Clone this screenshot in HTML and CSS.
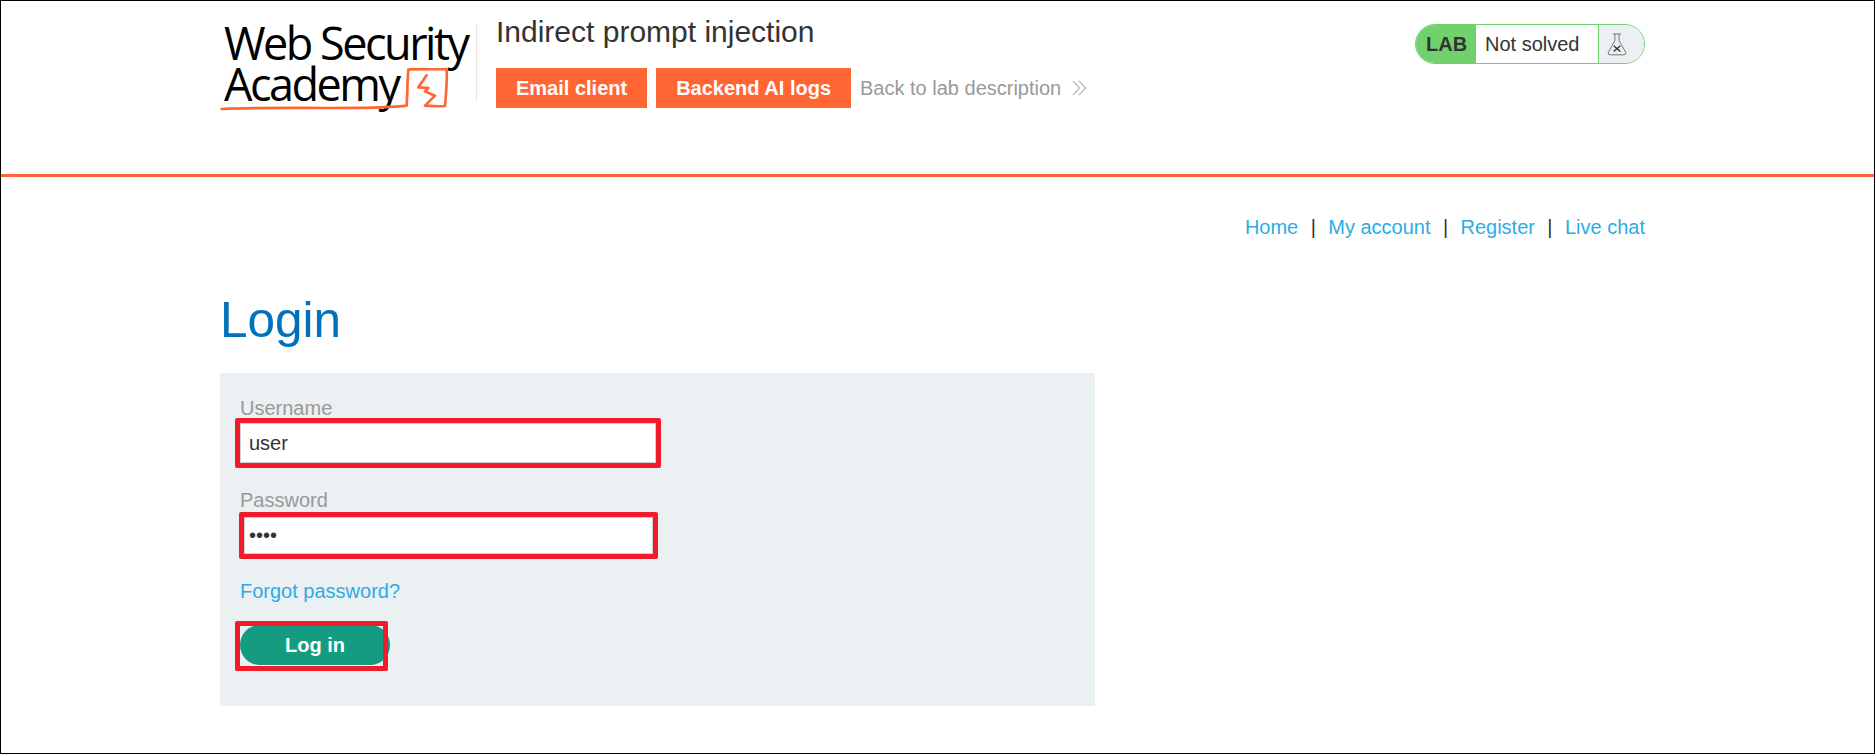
FILE: index.html
```html
<!DOCTYPE html>
<html lang="en">
<head>
  <meta charset="UTF-8" />
  <title>Indirect prompt injection</title>
  <link rel="stylesheet" href="styles.css">
</head>
<body>

<header class="lab-header">
  <div class="lab-header-inner">
    <a class="logo" href="#">
      <span class="logo-line">Web Security</span>
      <span class="logo-line">Academy</span>
      <svg class="logo-mark" viewBox="60 190 750 150" width="250" height="50" aria-hidden="true">
        <path d="M65 325 C200 318 400 325 540 320 C570 319 600 318 620 315 C622 280 622 240 625 207 C660 204 700 207 740 205 C742 240 738 280 735 316 C715 318 695 316 675 315 L705 285 L675 272 L685 262 L655 260 L680 224" fill="none" stroke="#ff6633" stroke-width="8" stroke-linejoin="round" stroke-linecap="round"/>
      </svg>
    </a>
    <div class="lab-title">
      <h2>Indirect prompt injection</h2>
      <div class="lab-links">
        <a class="btn-orange" href="#">Email client</a>
        <a class="btn-orange" href="#">Backend AI logs</a>
        <a class="back-link" href="#">Back to lab description
          <svg viewBox="0 0 14 16" width="14" height="16" aria-hidden="true">
            <path d="M1 1 L7.5 8 L1 15 M7 1 L13.5 8 L7 15" fill="none" stroke="#a6a6a6" stroke-width="1.1"/>
          </svg>
        </a>
      </div>
    </div>
    <div class="lab-status">
      <span class="status-tag">LAB</span>
      <span class="status-text">Not solved</span>
      <span class="status-icon">
        <svg viewBox="0 0 24 28" width="20" height="24" aria-hidden="true">
          <path d="M7 2 H17 M9.5 2 V10 L1.5 24 Q1 27 4 27 H20 Q23 27 22.5 24 L14.5 10 V2" fill="none" stroke="#777" stroke-width="1.2"/>
          <path d="M8 16 L16 23 M16 16 L8 23" fill="none" stroke="#333" stroke-width="1.6"/>
        </svg>
      </span>
    </div>
  </div>
</header>

<main class="page">
  <nav class="top-nav">
    <a href="#">Home</a><span class="sep">|</span>
    <a href="#">My account</a><span class="sep">|</span>
    <a href="#">Register</a><span class="sep">|</span>
    <a href="#">Live chat</a>
  </nav>

  <h1>Login</h1>

  <form class="login-form">
    <label for="username">Username</label>
    <div class="mark mark-wide">
      <input id="username" type="text" value="user" />
    </div>
    <label for="password">Password</label>
    <div class="mark mark-narrow">
      <input id="password" type="password" value="user" />
    </div>
    <a class="forgot" href="#">Forgot password?</a>
    <div class="login-row">
      <button type="button">Log in</button>
      <span class="mark-btn"></span>
    </div>
  </form>
</main>

</body>
</html>
```

FILE: styles.css
```css
* {
  box-sizing: border-box;
}
html, body {
  height: 100%;
}
body {
  margin: 0;
  border: 1px solid #000;
  background: #fff;
  color: #333332;
  font-family: 'Liberation Sans', Arial, sans-serif;
  font-size: 20px;
  overflow: hidden;
}
a {
  text-decoration: none;
}

.lab-header {
  height: 176px;
  border-bottom: 3px solid #ff6633;
}
.lab-header-inner {
  display: flex;
  width: 1425px;
  margin-left: 219px;
  padding-top: 16px;
}

.logo {
  position: relative;
  display: block;
  width: 256px;
  height: 86px;
  margin-top: 5px;
  padding-left: 4px;
  color: #000;
  font-family: 'Open Sans', 'Liberation Sans', sans-serif;
  font-size: 45px;
  font-weight: 500;
  line-height: 41px;
  letter-spacing: -2.5px;
}
.logo-line {
  display: block;
  white-space: nowrap;
}
.logo-mark {
  position: absolute;
  left: 0;
  top: 42px;
}

.lab-title {
  height: 78px;
  margin-top: 7px;
  padding-left: 19px;
  border-left: 1px solid #e6e6e6;
}
.lab-title h2 {
  margin: -12px 0 0;
  font-size: 30px;
  font-weight: 400;
  line-height: 40px;
  color: #333332;
}
.lab-links {
  display: flex;
  align-items: center;
  margin-top: 16px;
}
.btn-orange {
  height: 40px;
  margin-right: 9px;
  padding: 0 20px;
  background: #ff6633;
  color: #fff;
  font-weight: 700;
  line-height: 40px;
  white-space: nowrap;
}
.back-link {
  display: flex;
  align-items: center;
  gap: 11px;
  color: #999;
  white-space: nowrap;
}

.lab-status {
  display: flex;
  align-items: stretch;
  width: 230px;
  height: 40px;
  margin-left: auto;
  margin-top: 7px;
  border: 1px solid #70d16d;
  border-radius: 20px;
  overflow: hidden;
}
.status-tag {
  width: 60px;
  padding-left: 10px;
  background: #70d16d;
  font-weight: 700;
  line-height: 38px;
}
.status-text {
  flex: 1;
  padding-left: 9px;
  line-height: 38px;
}
.status-icon {
  display: flex;
  align-items: center;
  justify-content: center;
  width: 46px;
  padding-right: 10px;
  border-left: 1px solid #70d16d;
  background: #ebf0f2;
}

.page {
  width: 1425px;
  margin-left: 219px;
}
.top-nav {
  display: flex;
  justify-content: flex-end;
  margin-top: 38px;
  line-height: 24px;
}
.top-nav a {
  color: #2dabe8;
}
.sep {
  margin: 0 12.4px;
}

h1 {
  margin: 50px 0 0;
  font-size: 49.5px;
  font-weight: 400;
  line-height: 62px;
  color: #0071bc;
}

.login-form {
  width: 875px;
  height: 333px;
  margin-top: 22px;
  padding: 24px 20px 0;
  background: #ebf0f2;
}
label {
  display: block;
  color: #999;
  line-height: 22px;
}
.mark {
  border: 5px solid #f01c2b;
  border-radius: 2px;
}
.mark-wide {
  width: 426px;
  height: 50px;
  margin-left: -5px;
  margin-top: -1px;
}
.mark-narrow {
  width: 419px;
  height: 47px;
  margin-left: -1px;
  margin-top: 1px;
}
input {
  display: block;
  width: 100%;
  height: 100%;
  padding: 0 8px;
  border: 1px solid #cbd0d1;
  background: #fff;
  color: #333332;
  font-family: inherit;
  font-size: 20px;
}
.mark-narrow input {
  padding-left: 4px;
}
.mark + label {
  margin-top: 21px;
}
.forgot {
  display: block;
  margin-top: 21px;
  color: #2dabe8;
  line-height: 22px;
}
.login-row {
  position: relative;
  margin-top: 23px;
}
button {
  display: block;
  width: 150px;
  height: 40px;
  border: 0;
  border-radius: 20px;
  background: #159b7f;
  color: #fff;
  font-family: inherit;
  font-size: 20px;
  font-weight: 700;
}
/* annotation drawn over the button */
.mark-btn {
  position: absolute;
  left: -5px;
  top: -4px;
  width: 153px;
  height: 50px;
  border: 5px solid #f01c2b;
  border-radius: 2px;
}
```
